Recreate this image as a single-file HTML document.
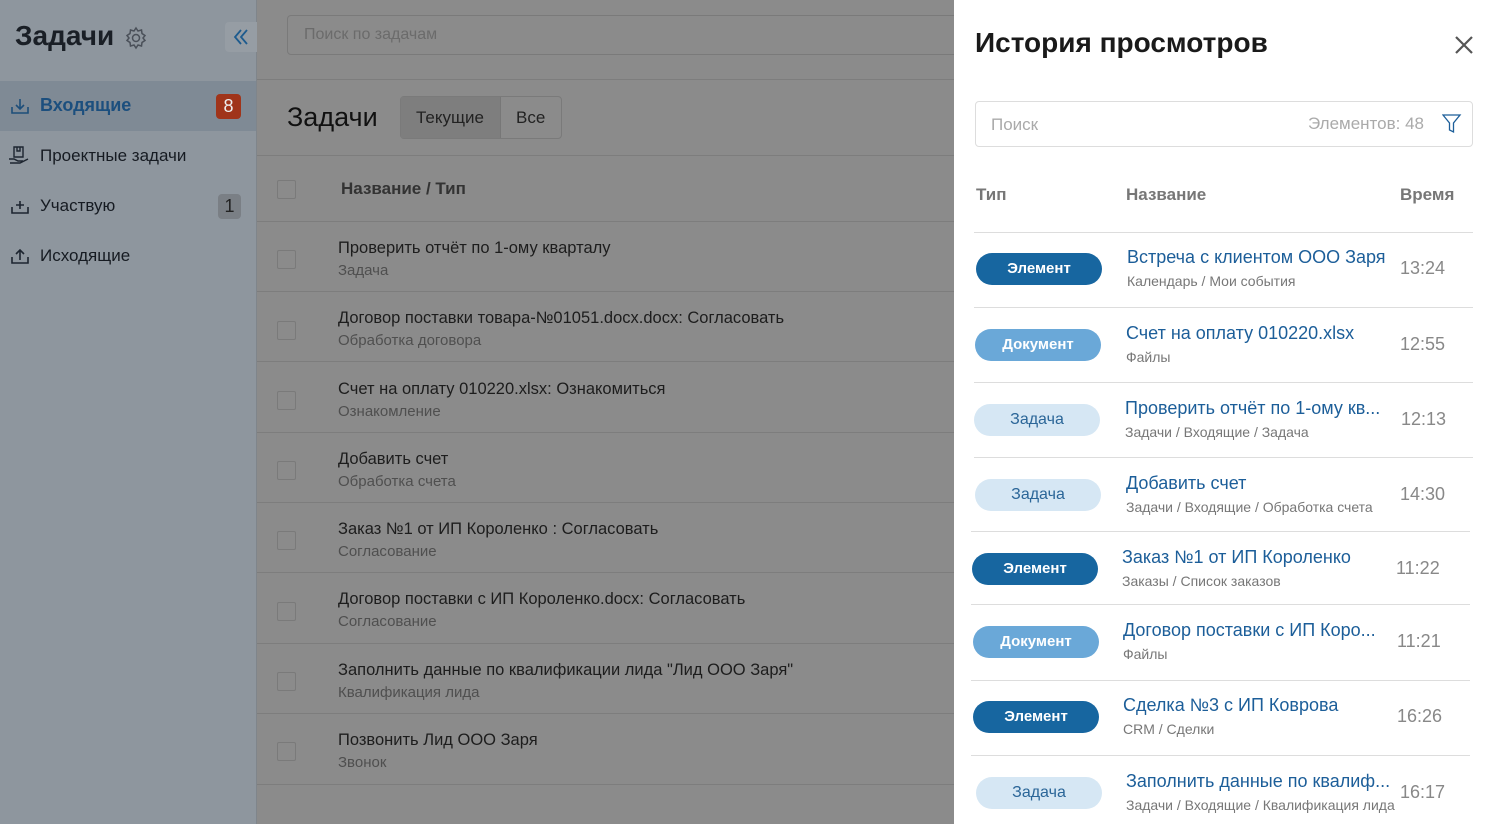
<!DOCTYPE html>
<html><head><meta charset="utf-8"><style>
*{box-sizing:border-box;margin:0;padding:0}
body{width:1487px;height:824px;overflow:hidden;font-family:"Liberation Sans","Noto Sans CJK SC",sans-serif;background:#8b8b8b;position:relative}
.a{position:absolute;white-space:nowrap}
#side{position:absolute;left:0;top:0;width:257px;height:824px;background:#8e969e;border-right:1px solid #7f858b}
#main{position:absolute;left:257px;top:0;width:697px;height:824px;background:#8b8b8b}
.hl{position:absolute;height:1px;background:#7d7d7d}
.cb{position:absolute;left:20px;width:19px;height:19px;border:1px solid #7a7a7a;border-radius:2px}
.t1{position:absolute;left:81px;font-size:16.5px;color:#1d1d1d;margin-top:2px}
.t2{position:absolute;left:81px;font-size:15px;color:#4f4f4f;margin-top:1px}
#panel{position:absolute;left:954px;top:0;width:533px;height:824px;background:#fff}
.pill{position:absolute;width:126px;height:32px;border-radius:16px;font-size:15px;text-align:center;line-height:32px}
.el{background:#1766a0;color:#fff;font-weight:bold}
.doc{background:#6aa8d8;color:#fff;font-weight:bold}
.zd{background:#d6e7f4;color:#2b6698;font-size:16px}
.nm{position:absolute;font-size:18px;color:#1c5e99}
.pt{position:absolute;font-size:14px;color:#777}
.tm{position:absolute;font-size:18px;color:#888}
.sep{position:absolute;height:1px;background:#ddd}
</style></head><body>
<div id="side">
<div class="a" style="left:15px;top:20px;font-size:28px;font-weight:bold;color:#1a1f26">Задачи</div>
<svg class="a" style="left:124px;top:26px" width="24" height="24" viewBox="0 0 24 24" fill="none" stroke="#4a5059" stroke-width="1.5"><circle cx="12" cy="12" r="3.5"/><path d="M12 2l2 3 3.5-1 .5 3.5 3 2-2 2.5 2 2.5-3 2-.5 3.5-3.5-1-2 3-2-3-3.5 1-.5-3.5-3-2 2-2.5-2-2.5 3-2 .5-3.5 3.5 1z"/></svg>
<div class="a" style="left:225px;top:22px;width:32px;height:30px;background:#969da4;border-radius:4px 0 0 4px"></div>
<svg class="a" style="left:232px;top:28px" width="18" height="18" fill="none" stroke="#1d5b8e" stroke-width="1.8"><path d="M9 2L3 9l6 7M15 2L9 9l6 7"/></svg>
<div class="a" style="left:0;top:81px;width:256px;height:50px;background:#7f8a95"></div>
<svg class="a" style="left:10px;top:96px" width="20" height="20" fill="none" stroke="#1d4e7a" stroke-width="1.6"><path d="M2 11v6h16v-6M10 3v10M6 9l4 4 4-4"/></svg>
<div class="a" style="left:40px;top:95px;font-size:18px;font-weight:bold;color:#1c4f7e">Входящие</div>
<div class="a" style="left:216px;top:94px;width:25px;height:25px;background:#a0341a;border-radius:4px;color:#eee;font-size:18px;text-align:center;line-height:25px">8</div>
<svg class="a" style="left:8px;top:146px" width="22" height="20" fill="none" stroke="#1d2530" stroke-width="1.4"><path d="M6 1h9v10H6zM9 1v4h3V1M1 13h5l4 2h5M2 17h10l8-4"/></svg>
<div class="a" style="left:40px;top:146px;font-size:17px;color:#161b22">Проектные задачи</div>
<svg class="a" style="left:10px;top:196px" width="20" height="20" fill="none" stroke="#1d2530" stroke-width="1.6"><path d="M2 11v6h16v-6M10 5v8M6 9h8"/></svg>
<div class="a" style="left:40px;top:196px;font-size:17px;color:#161b22">Участвую</div>
<div class="a" style="left:218px;top:194px;width:23px;height:25px;background:#7a7f85;border-radius:4px;color:#222;font-size:18px;text-align:center;line-height:25px">1</div>
<svg class="a" style="left:10px;top:246px" width="20" height="20" fill="none" stroke="#1d2530" stroke-width="1.6"><path d="M2 11v6h16v-6M10 14V4M6 8l4-4 4 4"/></svg>
<div class="a" style="left:40px;top:246px;font-size:17px;color:#161b22">Исходящие</div>
</div>
<div id="main">
<div class="a" style="left:30px;top:15px;width:700px;height:40px;border:1px solid #7a7a7a;border-radius:4px"></div>
<div class="a" style="left:47px;top:26px;font-size:16px;color:#6b6b6b">Поиск по задачам</div>
<div class="hl" style="left:0;top:79px;width:697px"></div>
<div class="a" style="left:30px;top:102px;font-size:27px;color:#111">Задачи</div>
<div class="a" style="left:143px;top:96px;width:162px;height:43px;border:1px solid #7a7a7a;border-radius:4px"></div>
<div class="a" style="left:144px;top:97px;width:100px;height:41px;background:#7e7e7e;border-right:1px solid #777"></div>
<div class="a" style="left:159px;top:108px;font-size:17px;color:#222">Текущие</div>
<div class="a" style="left:259px;top:108px;font-size:17px;color:#222">Все</div>
<div class="hl" style="left:0;top:155px;width:697px"></div>
<div class="cb" style="top:180px"></div>
<div class="a" style="left:84px;top:179px;font-size:17px;font-weight:bold;color:#333">Название / Тип</div>
<div class="hl" style="left:0;top:221px;width:697px"></div>
<div class="cb" style="top:250px"></div><div class="t1" style="top:237px">Проверить отчёт по 1-ому кварталу</div><div class="t2" style="top:261px">Задача</div><div class="hl" style="left:0;top:291px;width:697px"></div>
<div class="cb" style="top:321px"></div><div class="t1" style="top:307px">Договор поставки товара-№01051.docx.docx: Согласовать</div><div class="t2" style="top:331px">Обработка договора</div><div class="hl" style="left:0;top:361px;width:697px"></div>
<div class="cb" style="top:391px"></div><div class="t1" style="top:378px">Счет на оплату 010220.xlsx: Ознакомиться</div><div class="t2" style="top:402px">Ознакомление</div><div class="hl" style="left:0;top:432px;width:697px"></div>
<div class="cb" style="top:461px"></div><div class="t1" style="top:448px">Добавить счет</div><div class="t2" style="top:472px">Обработка счета</div><div class="hl" style="left:0;top:502px;width:697px"></div>
<div class="cb" style="top:531px"></div><div class="t1" style="top:518px">Заказ №1 от ИП Короленко : Согласовать</div><div class="t2" style="top:542px">Согласование</div><div class="hl" style="left:0;top:572px;width:697px"></div>
<div class="cb" style="top:602px"></div><div class="t1" style="top:588px">Договор поставки с ИП Короленко.docx: Согласовать</div><div class="t2" style="top:612px">Согласование</div><div class="hl" style="left:0;top:643px;width:697px"></div>
<div class="cb" style="top:672px"></div><div class="t1" style="top:659px">Заполнить данные по квалификации лида "Лид ООО Заря"</div><div class="t2" style="top:683px">Квалификация лида</div><div class="hl" style="left:0;top:713px;width:697px"></div>
<div class="cb" style="top:742px"></div><div class="t1" style="top:729px">Позвонить Лид ООО Заря</div><div class="t2" style="top:753px">Звонок</div><div class="hl" style="left:0;top:784px;width:697px"></div>
</div>
<div id="panel">
<div class="a" style="left:21px;top:27px;font-size:28px;font-weight:bold;color:#1a1a1a">История просмотров</div>
<svg class="a" style="left:500px;top:35px" width="20" height="20" stroke="#555" stroke-width="2.2"><path d="M2 2l16 16M18 2L2 18"/></svg>
<div class="a" style="left:21px;top:101px;width:498px;height:46px;border:1px solid #ddd;border-radius:4px"></div>
<div class="a" style="left:37px;top:115px;font-size:17px;color:#aaa">Поиск</div>
<div class="a" style="left:354px;top:114px;font-size:17px;color:#aaa">Элементов: 48</div>
<svg class="a" style="left:488px;top:113px" width="20" height="22" fill="none" stroke="#1c5e99" stroke-width="1.3"><path d="M1 2h17l-6.5 8v9l-4-2v-7z"/></svg>
<div class="a" style="left:22px;top:185px;font-size:17px;font-weight:bold;color:#777">Тип</div>
<div class="a" style="left:172px;top:185px;font-size:17px;font-weight:bold;color:#777">Название</div>
<div class="a" style="left:446px;top:185px;font-size:17px;font-weight:bold;color:#777">Время</div>
<div class="sep" style="left:20px;top:232px;width:499px"></div>
<div class="pill el" style="left:22px;top:253px">Элемент</div><div class="nm" style="left:173px;top:247px">Встреча с клиентом ООО Заря</div><div class="pt" style="left:173px;top:273px">Календарь / Мои события</div><div class="tm" style="left:446px;top:258px">13:24</div>
<div class="sep" style="left:20px;top:307px;width:499px"></div>
<div class="pill doc" style="left:21px;top:329px">Документ</div><div class="nm" style="left:172px;top:323px">Счет на оплату 010220.xlsx</div><div class="pt" style="left:172px;top:349px">Файлы</div><div class="tm" style="left:446px;top:334px">12:55</div>
<div class="sep" style="left:20px;top:382px;width:499px"></div>
<div class="pill zd" style="left:20px;top:404px">Задача</div><div class="nm" style="left:171px;top:398px">Проверить отчёт по 1-ому кв...</div><div class="pt" style="left:171px;top:424px">Задачи / Входящие / Задача</div><div class="tm" style="left:447px;top:409px">12:13</div>
<div class="sep" style="left:20px;top:457px;width:499px"></div>
<div class="pill zd" style="left:21px;top:479px">Задача</div><div class="nm" style="left:172px;top:473px">Добавить счет</div><div class="pt" style="left:172px;top:499px">Задачи / Входящие / Обработка счета</div><div class="tm" style="left:446px;top:484px">14:30</div>
<div class="sep" style="left:17px;top:531px;width:499px"></div>
<div class="pill el" style="left:18px;top:553px">Элемент</div><div class="nm" style="left:168px;top:547px">Заказ №1 от ИП Короленко</div><div class="pt" style="left:168px;top:573px">Заказы / Список заказов</div><div class="tm" style="left:442px;top:558px">11:22</div>
<div class="sep" style="left:17px;top:604px;width:499px"></div>
<div class="pill doc" style="left:19px;top:626px">Документ</div><div class="nm" style="left:169px;top:620px">Договор поставки с ИП Коро...</div><div class="pt" style="left:169px;top:646px">Файлы</div><div class="tm" style="left:443px;top:631px">11:21</div>
<div class="sep" style="left:17px;top:680px;width:499px"></div>
<div class="pill el" style="left:19px;top:701px">Элемент</div><div class="nm" style="left:169px;top:695px">Сделка №3 с ИП Коврова</div><div class="pt" style="left:169px;top:721px">CRM / Сделки</div><div class="tm" style="left:443px;top:706px">16:26</div>
<div class="sep" style="left:17px;top:755px;width:499px"></div>
<div class="pill zd" style="left:22px;top:777px">Задача</div><div class="nm" style="left:172px;top:771px">Заполнить данные по квалиф...</div><div class="pt" style="left:172px;top:797px">Задачи / Входящие / Квалификация лида</div><div class="tm" style="left:446px;top:782px">16:17</div>
</div>
</body></html>
